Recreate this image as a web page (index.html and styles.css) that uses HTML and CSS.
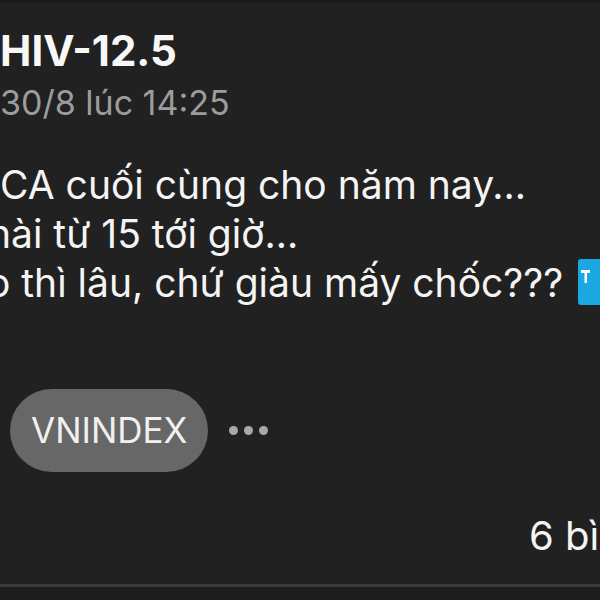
FILE: index.html
```html
<!DOCTYPE html>
<html lang="vi">
<head>
  <meta charset="UTF-8">
  <meta name="viewport" content="width=device-width, initial-scale=1.0">
  <title>HIV-12.5</title>
  <link rel="stylesheet" href="styles.css">
</head>
<body>
  <div class="post">
    <div class="author">HIV-12.5</div>
    <div class="time">30/8 lúc 14:25</div>
    <div class="content">
      <div class="line first">CA cuối cùng cho năm nay...</div>
      <div class="line second">hài từ 15 tới giờ...</div>
      <div class="line third">o thì lâu, chứ giàu mấy chốc???<span class="emoji">
          <svg width="46" height="46" viewBox="0 0 46 46">
            <rect x="0" y="0" width="46" height="46" rx="3" fill="#1aa7e2"/>
            <rect x="3" y="11" width="9" height="3" fill="#fff"/>
            <rect x="6.5" y="11" width="2.5" height="13" fill="#fff"/>
          </svg>
        </span></div>
    </div>
    <div class="tags">
      <span class="tag">VNINDEX</span>
      <span class="more"><i></i><i></i><i></i></span>
    </div>
    <div class="footer">6 bình luận</div>
  </div>
  <div class="divider"></div>
</body>
</html>
```

FILE: styles.css
```css
html, body {
  margin: 0;
  height: 100%;
}
body {
  width: 600px;
  height: 600px;
  overflow: hidden;
  background-color: #212121;
  border-top: 3px solid #191919;
  box-sizing: border-box;
  font-family: Inter, "Noto Sans", sans-serif;
  color: #f4f4f4;
}
.post {
  width: 800px;
  padding-top: 23px;
}
.author {
  font-size: 42px;
  font-weight: 700;
  line-height: 50px;
  color: #f7f7f7;
}
.time {
  margin-top: 5px;
  font-size: 34px;
  line-height: 44px;
  color: #9c9c9c;
}
.content {
  margin-top: 35px;
  font-size: 39px;
  line-height: 49px;
}
.line {
  white-space: nowrap;
}
.second {
  margin-left: -12px;
}
.third {
  margin-left: -13px;
}
.emoji {
  display: inline-block;
  vertical-align: -8px;
  height: 46px;
  margin-left: 15px;
}
.emoji svg {
  display: block;
}
.tags {
  display: flex;
  align-items: center;
  gap: 21px;
  margin-top: 82px;
  margin-left: 10px;
}
.tag {
  height: 83px;
  line-height: 83px;
  padding: 0 21px;
  border-radius: 42px;
  background-color: #676767;
  font-size: 35px;
  color: #f0f0f0;
}
.more {
  display: flex;
  gap: 6px;
}
.more i {
  width: 9px;
  height: 9px;
  border-radius: 50%;
  background-color: #a9a9a9;
}
.footer {
  margin-top: 40px;
  margin-left: 529px;
  font-size: 40px;
  line-height: 48px;
  white-space: nowrap;
}
.divider {
  position: fixed;
  left: 0;
  right: 0;
  top: 584px;
  height: 16px;
  border-top: 3px solid #393939;
  background-color: #1d1d1d;
}
```
